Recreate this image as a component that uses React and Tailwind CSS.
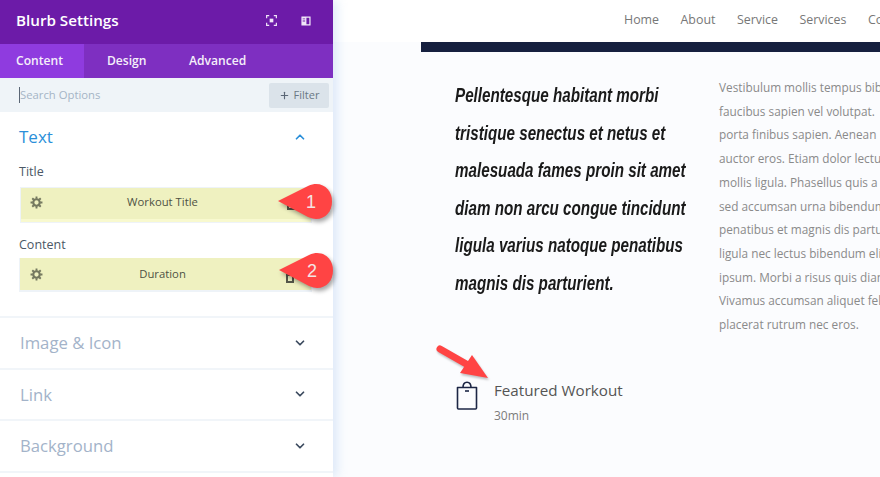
import React from 'react';
import { ChevronDown, ChevronUp, Plus } from 'lucide-react';

const bodyLines = [
  'Vestibulum mollis tempus bibendum.',
  'faucibus sapien vel volutpat.',
  'porta finibus sapien. Aenean',
  'auctor eros. Etiam dolor lectus,',
  'mollis ligula. Phasellus quis a',
  'sed accumsan urna bibendum',
  'penatibus et magnis dis parturient',
  'ligula nec lectus bibendum elit',
  'ipsum. Morbi a risus quis diam',
  'Vivamus accumsan aliquet felis',
  'placerat rutrum nec eros.',
];

const quoteLines = [
  'Pellentesque habitant morbi',
  'tristique senectus et netus et',
  'malesuada fames proin sit amet',
  'diam non arcu congue tincidunt',
  'ligula varius natoque penatibus',
  'magnis dis parturient.',
];

const Gear = () => (
  <svg width="13" height="13" viewBox="0 0 24 24" fill="none" stroke="#74785f" className="shrink-0">
    <circle cx="12" cy="12" r="6" strokeWidth="4" />
    <path d="M12 1v4M12 19v4M1 12h4M19 12h4M4.200 4.200l2.800 2.800M17 17l2.800 2.800M4.200 19.800L7 17M17 7l2.800-2.800" strokeWidth="3.500" />
  </svg>
);

const DynamicField = ({ label, value, labelGap, fieldClass, peekClass }) => (
  <div>
    <div className={`text-[12.500px] leading-[18px] text-[#4c5866] pl-[19px] ${labelGap}`}>{label}</div>
    <div className={`flex items-center relative bg-[#eff1c0] ${fieldClass}`}>
      <Gear />
      <span className="flex-1 text-center text-[11.300px] font-medium text-[#4e5244] pr-[29px]">{value}</span>
      <span className={`absolute left-[266px] w-[8px] h-[9px] border-2 border-[#55584a] ${peekClass}`}></span>
    </div>
  </div>
);

const Section = ({ label }) => (
  <div className="h-[51.500px] border-b-2 border-[#f1f5f9] flex items-center justify-between pl-[20px] pr-[26px]">
    <span className="text-[16.700px] text-[#a3b3c9]">{label}</span>
    <ChevronDown size={14} strokeWidth={3} className="text-[#3b4a5e]" />
  </div>
);

const Pin = ({ n, className }) => (
  <div className={`absolute w-[56px] h-[36px] ${className}`}>
    <svg width="56" height="36" viewBox="0 0 56 36" className="drop-shadow-[2px_3px_2px_rgba(0,0,0,0.35)]">
      <path d="M0 17 L30 2 C33 0.600 36 0 38 0 C48 0 54 8 54 17.500 C54 27 48 35 38 35 C36 35 33 34 30 33 Z" fill="#ff4444" />
    </svg>
    <span className="absolute left-[23px] top-[7px] w-[20px] text-center text-[18px] leading-[22px] text-[#f4e4e4] font-['Liberation_Sans',sans-serif]">{n}</span>
  </div>
);

export default function App() {
  return (
    <div className="w-[880px] h-[477px] overflow-hidden flex bg-[#fbfcfe] relative font-['Open_Sans',sans-serif]">
      <aside className="w-[333px] shrink-0 bg-white flex flex-col shadow-[4px_0_10px_rgba(150,190,235,0.3)] z-10 relative">
        <div className="h-[44px] pb-[3px] bg-[#6c1ba8] flex items-center justify-between pl-[16px] pr-[22px]">
          <span className="text-[15.200px] font-semibold text-white">Blurb Settings</span>
          <div className="flex items-center gap-[24px]">
            <svg width="11" height="11" viewBox="0 0 12 12" fill="none" stroke="#f0e6f8" strokeWidth="1.300">
              <path d="M0.700 3.500V0.700H3.500M8.500 0.700H11.300V3.500M11.300 8.500V11.300H8.500M3.500 11.300H0.700V8.500" />
              <rect x="4" y="4" width="4" height="4" fill="#f0e6f8" stroke="none" />
            </svg>
            <svg width="10" height="10" viewBox="0 0 12 12">
              <path fillRule="evenodd" fill="#f0e6f8" d="M1 0.500H11C11.300 0.500 11.500 0.700 11.500 1V11C11.500 11.300 11.300 11.500 11 11.500H1C0.700 11.500 0.500 11.300 0.500 11V1C0.500 0.700 0.700 0.500 1 0.500ZM6.500 2V10H10V2ZM2 3V4H5V3ZM2 5.500V6.500H5V5.500Z" />
            </svg>
          </div>
        </div>
        <div className="h-[34px] bg-[#7e2fc1] flex text-[12.100px] font-semibold text-[#f5effa]">
          <div className="w-[84px] bg-[#8f3bdf] flex items-center pl-[16px]">Content</div>
          <div className="w-[84px] flex items-center pl-[23px]">Design</div>
          <div className="flex items-center pl-[21px]">Advanced</div>
        </div>
        <div className="h-[34px] bg-[#eff4f8] flex items-center justify-between pl-[19px] pr-[4px]">
          <div className="flex items-center text-[11.300px] text-[#a5b4c6]">
            <span className="w-px h-[16px] bg-[#5a6675]"></span>
            <span>Search Options</span>
          </div>
          <div className="w-[60px] h-[25px] bg-[#dbe3ea] rounded-[2px] flex items-center justify-center gap-[4px] text-[11px] font-medium text-[#6a7885]">
            <Plus size={11} strokeWidth={2.500} className="text-[#5a6675]" />
            Filter
          </div>
        </div>
        <div className="h-[206px] border-b-2 border-[#f1f5f9] pt-[14px]">
          <div className="flex items-center justify-between pl-[19px] pr-[26px] h-[22px]">
            <span className="text-[17px] text-[#2b8fd9]">Text</span>
            <ChevronUp size={14} strokeWidth={3} className="text-[#2b8fd9]" />
          </div>
          <div className="pt-[15px] flex flex-col gap-[14px]">
            <DynamicField
              label="Title"
              value="Workout Title"
              labelGap="mb-[7px]"
              fieldClass="ml-[21px] w-[290px] h-[34px] pl-[9px] pb-[3px] border-b-[3px] border-[#f8f9cf] outline outline-[#eef3f8]"
              peekClass="top-[13px]"
            />
            <DynamicField
              label="Content"
              value="Duration"
              labelGap="mb-[4px]"
              fieldClass="ml-[20px] w-[291px] h-[32px] pl-[10px] shadow-[0_1px_0_1px_#eef3f8]"
              peekClass="top-[16px]"
            />
          </div>
        </div>
        <Section label="Image & Icon" />
        <Section label="Link" />
        <Section label="Background" />
      </aside>

      <main className="flex-1 min-w-0 flex flex-col">
        <nav className="h-[42px] pb-[2px] bg-white flex items-center gap-[21.500px] pl-[291px] text-[12.400px] font-medium text-[#777] whitespace-nowrap overflow-hidden">
          <span>Home</span>
          <span>About</span>
          <span>Service</span>
          <span>Services</span>
          <span>Contact</span>
        </nav>
        <div className="h-[10px] ml-[88px] bg-[#16203f]"></div>
        <div className="flex flex-1 overflow-hidden pl-[122px] pt-[25px]">
          <div className="w-[264px] shrink-0">
            <div className="origin-left scale-x-[0.76] font-['Liberation_Sans',sans-serif] italic font-bold text-[20px] leading-[37.500px] text-[#1a1a1a] whitespace-nowrap">
              {quoteLines.map((line) => (
                <div key={line}>{line}</div>
              ))}
            </div>
            <div className="flex mt-[77px] gap-[15px]">
              <svg width="24" height="30" viewBox="0 0 24 30" fill="none" stroke="#1c2645" strokeWidth="1.600" className="mt-[2px] shrink-0">
                <path d="M2.500 6.500H21.500V27C21.500 27.500 21 28 20.500 28H3.500C3 28 2.500 27.500 2.500 27Z" strokeLinejoin="round" />
                <path d="M8 6.500C8 3 9.500 1.200 12 1.200C14.500 1.200 16 3 16 6.500" />
                <path d="M10 10H14" />
              </svg>
              <div>
                <div className="text-[15.200px] leading-[22px] text-[#555]">Featured Workout</div>
                <div className="text-[12px] leading-[18px] mt-[6px] text-[#7b7b7b]">30min</div>
              </div>
            </div>
          </div>
          <div className="text-[11.800px] leading-[23.700px] text-[#8a8a8a] whitespace-nowrap -mt-[1px]">
            {bodyLines.map((line) => (
              <div key={line}>{line}</div>
            ))}
          </div>
        </div>
      </main>

      <Pin n="1" className="left-[278px] top-[184px] z-20" />
      <Pin n="2" className="left-[279px] top-[253px] z-20" />
      <svg width="64" height="46" viewBox="0 0 64 46" className="absolute left-[434px] top-[344px] z-20 drop-shadow-[1px_2px_1px_rgba(0,0,0,0.25)]">
        <path d="M6 5 L34 21" stroke="#ff4444" strokeWidth="7" strokeLinecap="round" />
        <path d="M54 34 L38 11 L26 29 Z" fill="#ff4444" />
      </svg>
    </div>
  );
}
